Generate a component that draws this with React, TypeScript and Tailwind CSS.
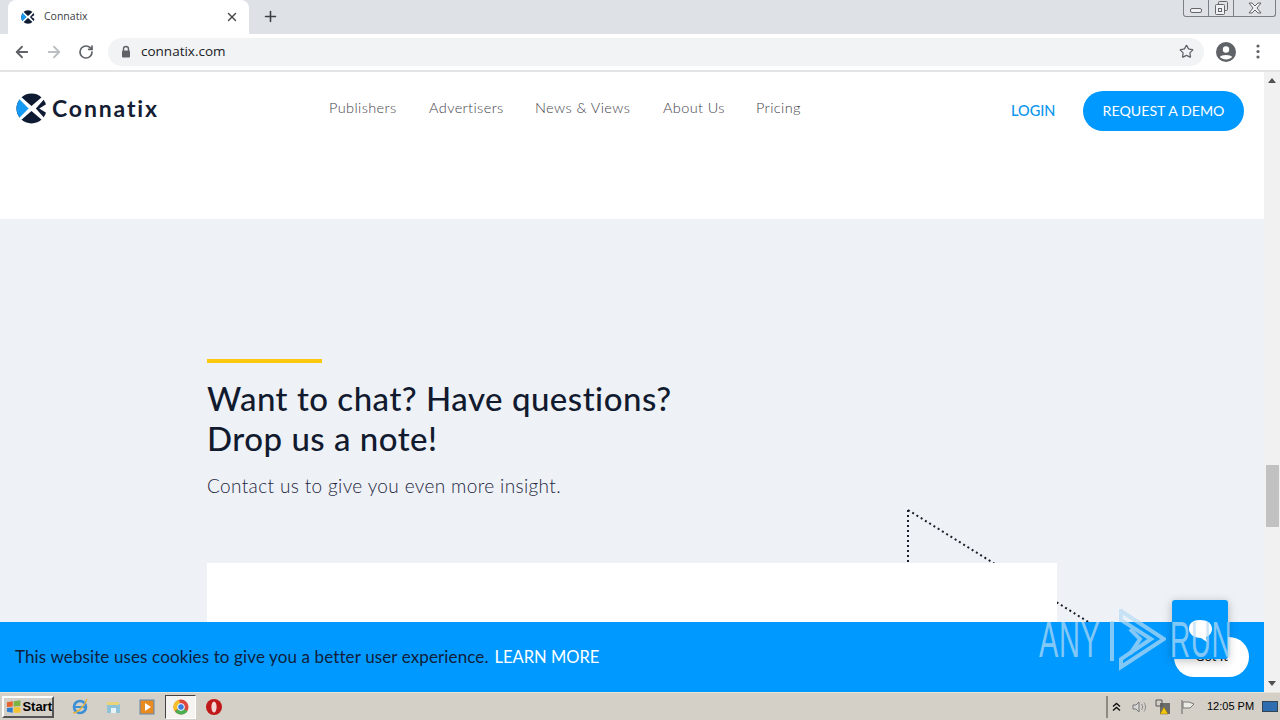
import React from "react";
import { ArrowLeft, ArrowRight, RotateCw, Star, X, Plus } from "lucide-react";

const ConnatixMark = ({ size }: { size: number }) => (
  <svg width={size} height={size} viewBox="0 0 32 32">
    <circle cx="16" cy="16" r="15.5" fill="#0e1b33" />
    <path d="M0.5 16 A15.5 15.5 0 0 1 6 4.5 L17 16 L6 27.5 A15.5 15.5 0 0 1 0.5 16Z" fill="#1499f5" />
    <path d="M4 3 L16 13.5 L28 3 L32 3 L20.5 16 L32 29 L28 29 L16 18.5 L4 29 L2 27 L13 16 L2 5Z" fill="#fff" />
    <path d="M24 16 L32 11 L32 21Z" fill="#fff" />
  </svg>
);

const Tab = () => (
  <div className="flex h-[34px] w-[241px] ml-2 items-center rounded-t-lg bg-white pl-[13px] pr-[10px]">
    <ConnatixMark size={14} />
    <span className="ml-[9px] flex-1 text-[10.5px] text-[#3c4043]">Connatix</span>
    <X size={14} strokeWidth={2.4} className="text-[#45484c]" />
  </div>
);

const BrowserChrome = () => (
  <div className="shrink-0">
    <div className="relative flex h-[34px] items-end bg-[#dee1e6]">
      <Tab />
      <Plus size={17} strokeWidth={2.2} className="ml-[13px] mb-[9px] text-[#3c4043]" />
      <div className="absolute right-[4px] top-0 flex h-[17px] w-[93px] rounded-b-[3px] border border-t-0 border-[#7b8088]">
        <div className="flex w-[25px] items-end justify-center border-r border-[#7b8088] pb-[3px]">
          <div className="h-[5px] w-[12px] rounded-[2px] border border-[#666] bg-[#eef0f3]" />
        </div>
        <div className="flex w-[25px] items-center justify-center border-r border-[#7b8088]">
          <svg width="13" height="14" viewBox="0 0 13 14">
            <rect x="3.5" y="0.5" width="9" height="9" rx="1" fill="#dee1e6" stroke="#666" />
            <rect x="0.5" y="3.5" width="9" height="10" rx="1" fill="#eef0f3" stroke="#666" />
            <rect x="3.5" y="7.5" width="3" height="3" fill="none" stroke="#666" />
          </svg>
        </div>
        <div className="flex flex-1 items-center justify-center">
          <svg width="14" height="12" viewBox="0 0 14 12">
            <path d="M1 1 H4 L7 4 L10 1 H13 L9 6 L13 11 H10 L7 8 L4 11 H1 L5 6Z" fill="#eef0f3" stroke="#666" />
          </svg>
        </div>
      </div>
    </div>
    <div className="flex h-[38px] items-center border-b-2 border-[#e3e4e6] bg-white pb-[1px]">
      <ArrowLeft size={18} strokeWidth={2.4} className="ml-[13px] text-[#5f6368]" />
      <ArrowRight size={18} strokeWidth={2.4} className="ml-[14px] text-[#bcbfc3]" />
      <RotateCw size={16} strokeWidth={2.6} className="ml-[15px] text-[#5f6368]" />
      <div className="ml-[14px] flex h-[28px] w-[1096px] items-center rounded-full bg-[#f1f3f4] pl-[12px] pr-[10px]">
        <svg width="12" height="13" viewBox="0 0 12 13">
          <path d="M3.5 6 V4 A2.5 2.5 0 0 1 8.5 4 V6" fill="none" stroke="#5f6368" strokeWidth="1.4" />
          <rect x="2" y="5.5" width="8" height="7" rx="1" fill="#5f6368" />
        </svg>
        <span className="ml-[9px] flex-1 text-[13.5px] text-[#202124]">connatix.com</span>
        <Star size={15} strokeWidth={2} className="text-[#5f6368]" />
      </div>
      <svg width="20" height="20" viewBox="0 0 20 20" className="ml-[12px]">
        <circle cx="10" cy="10" r="10" fill="#5f6368" />
        <circle cx="10" cy="7.5" r="3.2" fill="#fff" />
        <path d="M3.8 15 C5 12.2 15 12.2 16.2 15 C13 18.2 7 18.2 3.8 15Z" fill="#fff" />
      </svg>
      <svg width="4" height="15" viewBox="0 0 4 15" className="ml-[20px]">
        <circle cx="2" cy="2" r="1.6" fill="#5f6368" />
        <circle cx="2" cy="7.5" r="1.6" fill="#5f6368" />
        <circle cx="2" cy="13" r="1.6" fill="#5f6368" />
      </svg>
    </div>
  </div>
);

const navItems = [
  { label: "Publishers", w: "w-[100px]" },
  { label: "Advertisers", w: "w-[106px]" },
  { label: "News & Views", w: "w-[128px]" },
  { label: "About Us", w: "w-[93px]" },
  { label: "Pricing", w: "w-[60px]" },
];

const SiteHeader = () => (
  <div className="flex h-[147px] shrink-0 items-start bg-white">
    <div className="ml-4 mt-[19px] flex w-[313px] items-center">
      <ConnatixMark size={31} />
      <span className="ml-[5px] text-[23px] font-bold tracking-[1.85px] text-[#141d33]">Connatix</span>
    </div>
    <nav className="mt-[25px] flex text-[14.5px] font-light tracking-[0.4px] text-[#3f4249]">
      {navItems.map((item) => (
        <span key={item.label} className={item.w}>
          {item.label}
        </span>
      ))}
    </nav>
    <span className="ml-[195px] mt-[28px] w-[44px] text-[14.5px] font-medium text-[#0a96ee]">LOGIN</span>
    <button className="ml-[28px] mt-[19px] h-[40px] w-[161px] rounded-full bg-[#0099ff] text-[14.2px] text-white">
      REQUEST A DEMO
    </button>
  </div>
);

const DottedShape = () => (
  <svg className="absolute left-[900px] top-[283px]" width="200" height="130" viewBox="0 0 200 130">
    <path
      d="M8 8 L8 62 M8 8 L190 121"
      fill="none"
      stroke="#1a1f2b"
      strokeWidth="2"
      strokeDasharray="2 3"
    />
  </svg>
);

const ContactSection = () => (
  <div className="relative flex-1 bg-[#eef1f5] pl-[207px] pt-[140px]">
    <DottedShape />
    <div className="h-[4px] w-[115px] bg-[#fdc910]" />
    <h2 className="mt-[15px] text-[33px] font-medium leading-[40px] tracking-[0.5px] text-[#111a2e]">
      Want to chat? Have questions?
      <br />
      Drop us a note!
    </h2>
    <p className="mt-[15px] text-[19px] font-light leading-[26px] tracking-[0.37px] text-[#23263f]">
      Contact us to give you even more insight.
    </p>
    <div className="relative mt-[64px] h-[200px] w-[850px] bg-white" />
  </div>
);

const CookieBar = () => (
  <div className="absolute bottom-0 left-0 flex h-[70px] w-full items-center bg-[#0099ff] pl-[15px]">
    <span className="text-[17px] tracking-[0.12px] text-[#10203a]">
      This website uses cookies to give you a better user experience.
    </span>
    <span className="ml-[6px] text-[16.5px] text-white">LEARN MORE</span>
    <div className="absolute left-[1174px] top-[15px] flex h-[40px] w-[75px] items-center justify-center rounded-full bg-white text-[13px] text-[#111]">
      Got It
    </div>
  </div>
);

const ChatWidget = () => (
  <div className="absolute left-[1172px] top-[528px] flex h-[59px] w-[56px] items-center justify-center rounded-[3px] bg-[#0099ff] shadow-[0_2px_10px_rgba(0,0,0,0.25)]">
    <svg width="26" height="26" viewBox="0 0 26 26">
      <path d="M13 3 C20 3 25 6 25 12 C25 16 22 19 19 20 L20 25 L14 21 C7 21 2 17 2 12 C2 6 6 3 13 3Z" fill="#fff" />
    </svg>
  </div>
);

const Watermark = () => (
  <div className="pointer-events-none absolute left-[1039px] top-[536px] flex h-[64px] items-center text-[#b9dcf5] opacity-70">
    <span className="w-[71px] origin-left scale-x-[0.58] text-[50px] leading-none tracking-[1px] [font-family:'Liberation_Sans',sans-serif]">
      ANY
    </span>
    <svg width="56" height="62" viewBox="0 0 56 62">
      <path d="M2 12 V52" fill="none" stroke="currentColor" strokeWidth="4" />
      <path d="M11 2 L54 30 L11 58 V50 L41 30 L11 11Z" fill="none" stroke="currentColor" strokeWidth="4" />
      <path d="M20 45 L30 30 L20 20" fill="none" stroke="currentColor" strokeWidth="4" />
    </svg>
    <span className="ml-[4px] origin-left scale-x-[0.56] text-[50px] leading-none tracking-[1px] [font-family:'Liberation_Sans',sans-serif]">
      RUN
    </span>
  </div>
);

const Scrollbar = () => (
  <div className="flex w-4 shrink-0 flex-col items-center bg-[#f1f1f1]">
    <div className="mt-[6px] h-0 w-0 border-x-[4px] border-b-[5px] border-x-transparent border-b-[#505050]" />
    <div className="mt-[382px] h-[62px] w-[13px] bg-[#c1c1c1]" />
    <div className="mt-[154px] h-0 w-0 border-x-[4px] border-t-[5px] border-x-transparent border-t-[#505050]" />
  </div>
);

const Taskbar = () => (
  <div className="flex h-[28px] shrink-0 items-center border-t border-[#e8e4d8] bg-[#d4d0c8] [font-family:'Liberation_Sans',sans-serif]">
    <button className="ml-[2px] flex h-[22px] w-[52px] items-center border-2 border-b-[#555] border-l-white border-r-[#555] border-t-white pl-[2px] text-[13px] font-bold text-black">
      <svg width="16" height="16" viewBox="0 0 16 16">
        <path d="M1 3 L7 2 L7 7.5 L1 8Z" fill="#e8622c" />
        <path d="M8 2 L15 1 L15 7 L8 7.5Z" fill="#7cb342" />
        <path d="M1 9 L7 8.5 L7 14 L1 13Z" fill="#2f7fd1" />
        <path d="M8 8.5 L15 8 L15 14 L8 14Z" fill="#f4c430" />
      </svg>
      <span className="ml-[1px]">Start</span>
    </button>
    <svg width="18" height="18" viewBox="0 0 18 18" className="ml-[17px]">
      <circle cx="9" cy="9" r="6" fill="none" stroke="#3b8fd6" strokeWidth="2.6" />
      <path d="M3 9 H15" stroke="#3b8fd6" strokeWidth="2" />
      <path d="M2 15 C6 15 14 8 16 1" fill="none" stroke="#e2b33c" strokeWidth="1.4" />
    </svg>
    <svg width="17" height="17" viewBox="0 0 17 17" className="ml-[16px]">
      <path d="M2 4 H8 L9 6 H15 V15 H2Z" fill="#8fc3d8" />
      <path d="M2 4 H14 V7 H2Z" fill="#e8d27a" />
      <rect x="6" y="10" width="5" height="5" fill="#e9f2f6" />
    </svg>
    <svg width="16" height="16" viewBox="0 0 16 16" className="ml-[17px]">
      <rect x="1" y="1" width="14" height="14" fill="#e98a1f" stroke="#5c89b5" />
      <path d="M6 4 L12 8 L6 12Z" fill="#fff" />
    </svg>
    <div className="ml-[10px] flex h-[24px] w-[31px] items-center justify-center border border-b-white border-l-[#444] border-r-white border-t-[#444] bg-[#f5f4f1]">
      <svg width="16" height="16" viewBox="0 0 16 16">
        <circle cx="8" cy="8" r="7.5" fill="#e0483e" />
        <path d="M8 8 L14.5 12 A7.5 7.5 0 0 1 2 12.5Z" fill="#4caf50" />
        <path d="M8 8 L1.5 12 A7.5 7.5 0 0 1 6 .8Z" fill="#f6c026" />
        <circle cx="8" cy="8" r="3.4" fill="#3b7fe0" stroke="#fff" />
      </svg>
    </div>
    <svg width="18" height="18" viewBox="0 0 18 18" className="ml-[9px]">
      <circle cx="9" cy="9" r="8" fill="#c01818" />
      <ellipse cx="9" cy="9" rx="2.6" ry="5.6" fill="#f3d6d6" />
    </svg>
    <div className="ml-auto flex h-[22px] w-[174px] shrink-0 items-center border-l-2 border-[#8d8a82] pl-[4px] text-[#333]">
      <svg width="9" height="10" viewBox="0 0 9 10">
        <path d="M1 4.5 L4.5 1.5 L8 4.5 M1 8.5 L4.5 5.5 L8 8.5" fill="none" stroke="#111" strokeWidth="1.4" />
      </svg>
      <svg width="16" height="14" viewBox="0 0 16 14" className="ml-[10px]">
        <path d="M2 5 H5 L8 2 V12 L5 9 H2Z" fill="#d8d8d8" stroke="#777" />
        <path d="M10.5 4 C12 6 12 8 10.5 10 M13 2.5 C15 5.5 15 8.5 13 11.5" fill="none" stroke="#888" />
      </svg>
      <svg width="18" height="18" viewBox="0 0 18 18" className="ml-[7px]">
        <rect x="6" y="5" width="10" height="11" fill="#6b6b6b" />
        <path d="M2 2 H8 V8 H2Z" fill="none" stroke="#555" />
        <path d="M10 9 L14 16 H6Z" fill="#f2c811" stroke="#8a6d00" strokeWidth="0.5" />
      </svg>
      <svg width="16" height="16" viewBox="0 0 16 16" className="ml-[8px]">
        <path d="M2 1 V15" stroke="#777" strokeWidth="1.2" />
        <path d="M3 3 H9 L14 5 L10 9 H3Z" fill="#eceae4" stroke="#777" />
      </svg>
      <span className="ml-[11px] whitespace-nowrap text-[11px] text-black">12:05 PM</span>
      <div className="ml-[8px] h-[11px] w-[16px] border border-[#345] bg-[#2d6db0]" />
    </div>
  </div>
);

export default function App() {
  return (
    <div className="flex h-[720px] w-[1280px] flex-col overflow-hidden font-['Open_Sans',sans-serif]">
      <BrowserChrome />
      <div className="relative flex min-h-0 flex-1">
        <div className="relative flex w-[1264px] flex-col overflow-hidden [font-family:Lato,sans-serif]">
          <SiteHeader />
          <ContactSection />
          <CookieBar />
          <ChatWidget />
          <Watermark />
        </div>
        <Scrollbar />
      </div>
      <Taskbar />
    </div>
  );
}
